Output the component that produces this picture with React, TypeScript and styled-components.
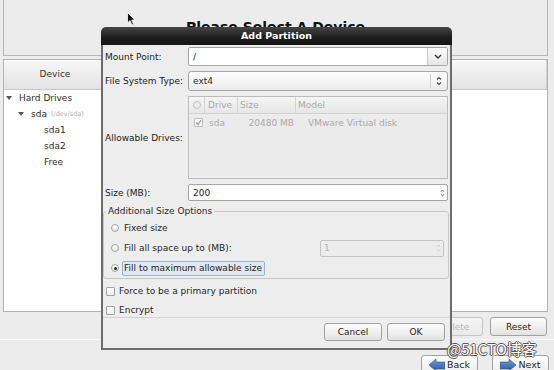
import styled, { createGlobalStyle } from "styled-components";

const GlobalStyle = createGlobalStyle`
  html, body {
    margin: 0;
    padding: 0;
    background: #ececec;
  }
  body {
    font-family: "DejaVu Sans", "Liberation Sans", sans-serif;
    font-size: 9px;
    color: #2b2b2b;
  }
`;

const Screen = styled.div`
  position: relative;
  width: 554px;
  height: 370px;
  overflow: hidden;
  background: #ececec;
  display: flex;
  flex-direction: column;
`;

const Workspace = styled.div`
  display: flex;
  flex-direction: column;
  margin: -1px 6px 0 3px;
`;

const TopPanel = styled.div`
  height: 57px;
  box-sizing: border-box;
  border: 1px solid #b6b6b6;
  padding-top: 19px;
  text-align: center;
`;

const PageTitle = styled.h1`
  margin: 0;
  font-size: 14px;
  line-height: 16px;
  font-weight: bold;
  color: #111;
`;

const DevicePanel = styled.div`
  margin-top: 3px;
  height: 253px;
  box-sizing: border-box;
  border: 1px solid #b2b2b2;
  background: #fff;
  display: flex;
  flex-direction: column;
`;

const HeaderRow = styled.div`
  height: 30px;
  box-sizing: border-box;
  display: flex;
  border-bottom: 1px solid #c9c9c9;
  background: linear-gradient(#f7f7f7, #e3e3e3);
`;

const HeaderCell = styled.div<{ $width?: number }>`
  width: ${({ $width }) => ($width ? `${$width}px` : "auto")};
  flex: ${({ $width }) => ($width ? "none" : 1)};
  line-height: 29px;
  text-align: center;
  color: #333;
  border-right: 1px solid #d2d2d2;
`;

const TreeBody = styled.div`
  display: flex;
  flex-direction: column;
`;

const TreeRow = styled.div<{ $indent: number }>`
  height: 16px;
  display: flex;
  align-items: center;
  padding-left: ${({ $indent }) => $indent}px;
  color: #2e2e2e;
`;

const Expander = styled.span<{ $open?: boolean }>`
  width: 13px;
  flex: none;
  display: flex;
  align-items: center;

  &::before {
    content: "";
    display: ${({ $open }) => ($open ? "block" : "none")};
    border-left: 3.5px solid transparent;
    border-right: 3.5px solid transparent;
    border-top: 4px solid #555;
  }
`;

const DevPath = styled.span`
  margin-left: 4px;
  font-size: 6.5px;
  color: #b0b0b0;
`;

const ActionRow = styled.div`
  margin-top: 5px;
  display: flex;
  justify-content: flex-end;
  gap: 7px;
  padding-right: 1px;
`;

const Button = styled.button<{ $w?: number }>`
  width: ${({ $w }) => $w ?? 57}px;
  height: 19px;
  box-sizing: border-box;
  padding: 0;
  border: 1px solid #a2a2a2;
  border-radius: 3px;
  background: linear-gradient(#fdfdfd, #e2e2e2);
  font-family: "DejaVu Sans", sans-serif;
  font-size: 9px;
  color: #262626;

  &:disabled {
    color: #b9b9b9;
    border-color: #c6c6c6;
    background: linear-gradient(#f5f5f5, #e9e9e9);
  }
`;

const Separator = styled.div`
  margin-top: 3px;
  height: 1px;
  background: #c6c6c6;
  border-bottom: 1px solid #f8f8f8;
`;

const NavRow = styled.div`
  margin-top: 15px;
  display: flex;
  justify-content: flex-end;
  gap: 14px;
  padding-right: 5px;
`;

const NavButton = styled.button`
  width: 57px;
  height: 26px;
  box-sizing: border-box;
  padding: 3px 0 0;
  border: 1px solid #a2a2a2;
  border-radius: 3px;
  background: linear-gradient(#fdfdfd, #e6e6e6);
  display: flex;
  align-items: flex-start;
  justify-content: center;
  gap: 2px;
  font-family: "DejaVu Sans", sans-serif;
  font-size: 9.5px;
  line-height: 12px;
  color: #262626;
`;

const Watermark = styled.div`
  position: absolute;
  left: 447px;
  top: 339px;
  font-family: "Noto Sans CJK SC", "Noto Sans", sans-serif;
  font-size: 15px;
  line-height: 20px;
  color: #fff;
  text-shadow: 1px 0 0 #555, -1px 0 0 #555, 0 1px 0 #555, 0 -1px 0 #555;
`;

const Cursor = styled.svg`
  position: absolute;
  left: 127px;
  top: 12px;
`;

/* dialog */

const Dialog = styled.div`
  position: absolute;
  left: 101px;
  top: 27px;
  width: 351px;
  display: flex;
  flex-direction: column;
`;

const TitleBar = styled.div`
  height: 18px;
  border-radius: 5px 5px 0 0;
  background: linear-gradient(#454545, #1d1d1d 60%, #161616);
  color: #fff;
  font-weight: bold;
  font-size: 9.5px;
  line-height: 18px;
  text-align: center;
`;

const DialogBody = styled.div`
  background: #ededed;
  border: 2px solid #6c6c6c;
  border-top: none;
  padding: 2px 2px 7px 2px;
  display: flex;
  flex-direction: column;
`;

const FieldRow = styled.div<{ $h: number; $top?: number }>`
  height: ${({ $h }) => $h}px;
  margin-top: ${({ $top }) => $top ?? 0}px;
  display: flex;
  align-items: center;
`;

const FieldLabel = styled.div`
  width: 83px;
  flex: none;
  color: #222;
`;

const Entry = styled.div<{ $disabled?: boolean }>`
  flex: 1;
  align-self: stretch;
  display: flex;
  align-items: center;
  box-sizing: border-box;
  border: 1px solid ${({ $disabled }) => ($disabled ? "#c4c4c4" : "#a5a5a5")};
  border-radius: 2px;
  background: ${({ $disabled }) => ($disabled ? "#ececec" : "#fff")};
  color: ${({ $disabled }) => ($disabled ? "#b4b4b4" : "#222")};
  padding-left: 4px;
`;

const EntryText = styled.span`
  flex: 1;
`;

const DropButton = styled.div`
  width: 19px;
  align-self: stretch;
  display: flex;
  align-items: center;
  justify-content: center;
  border-left: 1px solid #c6c6c6;
  background: linear-gradient(#fafafa, #e6e6e6);
`;

const Combo = styled.div`
  flex: 1;
  align-self: stretch;
  display: flex;
  align-items: center;
  box-sizing: border-box;
  border: 1px solid #a5a5a5;
  border-radius: 3px;
  background: linear-gradient(#fefefe, #ebebeb);
  padding-left: 4px;
`;

const ComboArrows = styled.div`
  width: 16px;
  height: 14px;
  display: flex;
  align-items: center;
  justify-content: center;
  border-left: 1px solid #cdcdcd;
`;

const SpinArrows = styled.div<{ $faded?: boolean }>`
  width: 9px;
  align-self: stretch;
  display: flex;
  align-items: center;
  justify-content: center;
  color: ${({ $faded }) => ($faded ? "#c2c2c2" : "#555")};
`;

const DriveTable = styled.div`
  flex: 1;
  align-self: stretch;
  box-sizing: border-box;
  border: 1px solid #bcbcbc;
  background: #ebebeb;
  display: flex;
  flex-direction: column;
`;

const TableHead = styled.div`
  height: 17px;
  box-sizing: border-box;
  display: flex;
  border-bottom: 1px solid #d2d2d2;
  background: linear-gradient(#f5f5f5, #e6e6e6);
  color: #a9a9a9;
`;

const TableRow = styled.div`
  height: 17px;
  display: flex;
  align-items: center;
  color: #aaa;
`;

const Col = styled.div<{ $w?: number; $pad?: number; $right?: boolean; $line?: boolean }>`
  width: ${({ $w }) => ($w ? `${$w}px` : "auto")};
  flex: ${({ $w }) => ($w ? "none" : 1)};
  box-sizing: border-box;
  display: flex;
  align-items: center;
  justify-content: ${({ $right }) => ($right ? "flex-end" : "flex-start")};
  padding: 0 ${({ $right }) => ($right ? 2 : 0)}px 0 ${({ $pad }) => $pad ?? 0}px;
  border-right: ${({ $line }) => ($line ? "1px solid #d4d4d4" : "none")};
  white-space: nowrap;
`;

const HeadCircle = styled.span`
  width: 6px;
  height: 6px;
  border: 1px solid #c0c0c0;
  border-radius: 50%;
  margin-left: 4px;
`;

const TinyCheck = styled.span`
  width: 9px;
  height: 9px;
  box-sizing: border-box;
  margin-left: 5px;
  border: 1px solid #bdbdbd;
  border-radius: 1px;
  background: #f6f6f6;
  display: flex;
  align-items: center;
  justify-content: center;
`;

const Frame = styled.fieldset`
  margin: 4px -1px 0 -2px;
  padding: 1px 0 0;
  min-width: 0;
  border: 1px solid #c8c8c8;
  border-radius: 3px;
  display: flex;
  flex-direction: column;
`;

const FrameLegend = styled.legend`
  margin-left: 2px;
  padding: 0 2px;
  font-size: 9px;
  line-height: 12px;
  color: #2a2a2a;
`;

const RadioRow = styled.label`
  height: 20px;
  display: flex;
  align-items: center;
  padding-left: 7px;
  padding-right: 4px;
`;

const Radio = styled.span<{ $checked?: boolean }>`
  width: 8px;
  height: 8px;
  box-sizing: border-box;
  flex: none;
  border: 1px solid #a3a3a3;
  border-radius: 50%;
  background: linear-gradient(#fff, #e4e4e4);
  display: flex;
  align-items: center;
  justify-content: center;

  &::after {
    content: "";
    display: ${({ $checked }) => ($checked ? "block" : "none")};
    width: 3px;
    height: 3px;
    border-radius: 50%;
    background: #2a2a2a;
  }
`;

const RadioText = styled.span<{ $focused?: boolean }>`
  margin-left: 3px;
  padding: 0 2px 0 1px;
  line-height: 13px;
  border: 1px solid ${({ $focused }) => ($focused ? "#9fb3cd" : "transparent")};
  border-radius: 2px;
  background: ${({ $focused }) => ($focused ? "#e0e7f0" : "transparent")};
  color: #262626;
`;

const LimitSpin = styled(Entry)`
  flex: none;
  width: 124px;
  height: 17px;
  align-self: center;
  margin-left: auto;
  padding-left: 3px;
`;

const CheckRow = styled.label<{ $top: number }>`
  height: 14px;
  margin-top: ${({ $top }) => $top}px;
  display: flex;
  align-items: center;
  gap: 4px;
  padding-left: 1px;
  color: #262626;
`;

const CheckBox = styled.span`
  width: 9px;
  height: 9px;
  box-sizing: border-box;
  border: 1px solid #a3a3a3;
  border-radius: 1px;
  background: linear-gradient(#fff, #ececec);
`;

const DialogRule = styled.div`
  margin: 0 -2px 0 -2px;
  height: 1px;
  background: #d3d3d3;
`;

const DialogButtons = styled.div`
  margin-top: 5px;
  display: flex;
  justify-content: flex-end;
  gap: 5px;
  padding-right: 3px;
`;

const DialogButton = styled(Button)`
  width: 58px;
  height: 18px;
`;

const ChevronDown = () => (
  <svg width="8" height="5" viewBox="0 0 8 5">
    <path d="M1 1 L4 4 L7 1" fill="none" stroke="#333" strokeWidth="1.4" />
  </svg>
);

const UpDown = ({ color = "#555", w = 6, h = 10 }: { color?: string; w?: number; h?: number }) => (
  <svg width={w} height={h} viewBox="0 0 6 10">
    <path d="M1 3.5 L3 1.5 L5 3.5 M1 6.5 L3 8.5 L5 6.5" fill="none" stroke={color} strokeWidth="1.1" />
  </svg>
);

const NavArrow = ({ dir }: { dir: "left" | "right" }) => (
  <svg width="16" height="12" viewBox="0 0 16 12">
    <defs>
      <linearGradient id={`nav-${dir}`} x1="0" y1="0" x2="0" y2="1">
        <stop offset="0" stopColor="#6d9ad6" />
        <stop offset="1" stopColor="#2a5ea8" />
      </linearGradient>
    </defs>
    <polygon
      points={dir === "left" ? "0,6 7,0 7,3 16,3 16,10 7,10 7,12" : "16,6 9,0 9,3 0,3 0,10 9,10 9,12"}
      fill={`url(#nav-${dir})`}
      stroke="#2a5290"
      strokeWidth="0.6"
    />
  </svg>
);

const App = () => {
  return (
    <>
      <GlobalStyle />
      <Screen>
        <Workspace>
          <TopPanel>
            <PageTitle>Please Select A Device</PageTitle>
          </TopPanel>

          <DevicePanel>
            <HeaderRow>
              <HeaderCell $width={102}>Device</HeaderCell>
              <HeaderCell $width={120} />
              <HeaderCell />
            </HeaderRow>
            <TreeBody>
              <TreeRow $indent={2}>
                <Expander $open />
                Hard Drives
              </TreeRow>
              <TreeRow $indent={14}>
                <Expander $open />
                sda
                <DevPath>(/dev/sda)</DevPath>
              </TreeRow>
              <TreeRow $indent={27}>
                <Expander />
                sda1
              </TreeRow>
              <TreeRow $indent={27}>
                <Expander />
                sda2
              </TreeRow>
              <TreeRow $indent={27}>
                <Expander />
                Free
              </TreeRow>
            </TreeBody>
          </DevicePanel>

          <ActionRow>
            <Button disabled>Delete</Button>
            <Button>Reset</Button>
          </ActionRow>
        </Workspace>

        <Separator />

        <NavRow>
          <NavButton>
            <NavArrow dir="left" />
            Back
          </NavButton>
          <NavButton>
            <NavArrow dir="right" />
            Next
          </NavButton>
        </NavRow>

        <Cursor width="9" height="14" viewBox="0 0 9 14">
          <path d="M0.5 0.5 L0.5 11 L3 8.6 L5 13 L6.6 12.2 L4.7 8 L8 8 Z" fill="#111" stroke="#fff" strokeWidth="0.8" />
        </Cursor>

        <Dialog>
          <TitleBar>Add Partition</TitleBar>
          <DialogBody>
            <FieldRow $h={19}>
              <FieldLabel>Mount Point:</FieldLabel>
              <Entry>
                <EntryText>/</EntryText>
                <DropButton>
                  <ChevronDown />
                </DropButton>
              </Entry>
            </FieldRow>

            <FieldRow $h={20} $top={5}>
              <FieldLabel>File System Type:</FieldLabel>
              <Combo>
                <EntryText>ext4</EntryText>
                <ComboArrows>
                  <UpDown color="#444" />
                </ComboArrows>
              </Combo>
            </FieldRow>

            <FieldRow $h={83} $top={5}>
              <FieldLabel>Allowable Drives:</FieldLabel>
              <DriveTable>
                <TableHead>
                  <Col $w={16} $line>
                    <HeadCircle />
                  </Col>
                  <Col $w={33} $pad={3} $line>
                    Drive
                  </Col>
                  <Col $w={58} $pad={2} $line>
                    Size
                  </Col>
                  <Col $pad={2}>Model</Col>
                </TableHead>
                <TableRow>
                  <Col $w={16}>
                    <TinyCheck>
                      <svg width="7" height="7" viewBox="0 0 7 7">
                        <path d="M1 3.5 L3 5.5 L6 1" fill="none" stroke="#9a9a9a" strokeWidth="1.2" />
                      </svg>
                    </TinyCheck>
                  </Col>
                  <Col $w={33} $pad={4}>
                    sda
                  </Col>
                  <Col $w={58} $right>
                    20480 MB
                  </Col>
                  <Col $pad={12}>VMware Virtual disk</Col>
                </TableRow>
              </DriveTable>
            </FieldRow>

            <FieldRow $h={17} $top={5}>
              <FieldLabel>Size (MB):</FieldLabel>
              <Entry>
                <EntryText>200</EntryText>
                <SpinArrows>
                  <UpDown w={5} h={10} />
                </SpinArrows>
              </Entry>
            </FieldRow>

            <Frame>
              <FrameLegend>Additional Size Options</FrameLegend>
              <RadioRow>
                <Radio />
                <RadioText>Fixed size</RadioText>
              </RadioRow>
              <RadioRow>
                <Radio />
                <RadioText>Fill all space up to (MB):</RadioText>
                <LimitSpin $disabled>
                  <EntryText>1</EntryText>
                  <SpinArrows $faded>
                    <UpDown color="#c0c0c0" w={5} h={10} />
                  </SpinArrows>
                </LimitSpin>
              </RadioRow>
              <RadioRow>
                <Radio $checked />
                <RadioText $focused>Fill to maximum allowable size</RadioText>
              </RadioRow>
            </Frame>

            <CheckRow $top={5}>
              <CheckBox />
              Force to be a primary partition
            </CheckRow>
            <CheckRow $top={5}>
              <CheckBox />
              Encrypt
            </CheckRow>

            <DialogRule />

            <DialogButtons>
              <DialogButton>Cancel</DialogButton>
              <DialogButton>OK</DialogButton>
            </DialogButtons>
          </DialogBody>
        </Dialog>

        <Watermark>@51CTO博客</Watermark>
      </Screen>
    </>
  );
};

export default App;
